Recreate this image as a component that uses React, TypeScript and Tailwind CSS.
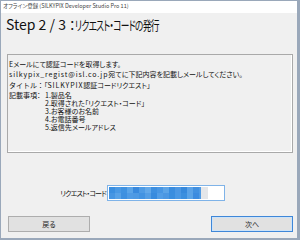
import React from "react";

const jp = "font-['Noto_Sans_CJK_JP','Noto_Sans',sans-serif]";

function Mosaic() {
  const cols = ["#3b8fe0", "#4a99e4", "#3f92e1", "#5aa4e8", "#3889dd", "#4e9be5", "#62a8e9", "#3d8fe0", "#4896e3", "#5ca4e7", "#3a8ddf", "#4b97e3", "#3689dc", "#5aa2e7", "#4190e0"];
  return (
    <svg width="100" height="12" viewBox="0 0 100 12" className="block">
      {cols.map((c, i) => (
        <rect key={i} x={i * 6} y={0} width={6} height={12} fill={c} />
      ))}
      {cols.map((c, i) => (
        <rect key={"b" + i} x={i * 6} y={6} width={6} height={6} fill={cols[(i + 5) % cols.length]} opacity={0.6} />
      ))}
      <rect x={90} y={0} width={6} height={12} fill="#4f9ae4" />
      <rect x={92} y={0} width={7} height={12} fill="#e4e6e9" />
    </svg>
  );
}

export default function App() {
  return (
    <div className={`w-[300px] h-[240px] flex flex-col bg-[#f0f0f0] border-t border-l border-r-[3px] border-b-[2px] border-[#9aa8ba] ${jp} [font-feature-settings:'palt'] text-black overflow-hidden`}>
      <div className="h-[12px] shrink-0 bg-white flex items-center pl-[2px] text-[5.5px] leading-none text-[#444] whitespace-nowrap">
        オフライン登録 (SILKYPIX Developer Studio Pro 11)
      </div>
      <div className="h-[41px] shrink-0 pt-[3px] pl-[5px]">
        <div className="flex items-baseline leading-[16px] whitespace-nowrap text-[#111]">
          <span className="text-[14px]">Step 2 / 3</span>
          <span className="text-[13px] ml-[3px]">：</span>
          <span className="inline-block origin-left scale-x-[0.67] text-[13px] tracking-[-1px]">リクエスト・コードの発行</span>
        </div>
      </div>
      <div className="h-[99px] shrink-0 ml-[6px] mr-[4px] border border-[#a9a9a9] shadow-[inset_-1px_-1px_0_#ffffff] pl-[1px] pt-[4px] text-[7px] text-[#111] whitespace-nowrap">
        <div className="leading-[10px]">Eメールにて認証コードを取得します。</div>
        <div className="leading-[10px]">
          <span className="tracking-[0.85px]">silkypix_regist@isl.co.jp</span>宛てに下記内容を記載しメールしてください。
        </div>
        <div className="leading-[10px] mt-[1px]">
          <span className="[font-feature-settings:normal]">タイトル：</span>「<span className="tracking-[0.9px]">SILKYPIX</span>認証コードリクエスト」
        </div>
        <div className="flex mt-[1px] leading-[8px]">
          <div className="w-[36px] shrink-0">記載事項：</div>
          <div className="flex flex-col">
            <div>1.製品名</div>
            <div>2.取得された「リクエスト・コード」</div>
            <div>3.お客様のお名前</div>
            <div>4.お電話番号</div>
            <div>5.返信先メールアドレス</div>
          </div>
        </div>
      </div>
      <div className="h-[32px] shrink-0" />
      <div className="h-[16px] shrink-0 flex items-center">
        <div className="w-[106px] shrink-0 text-right text-[7px] tracking-[-0.8px] leading-none text-[#111] pr-[1px]">リクエスト・コード</div>
        <div className="w-[118px] h-[16px] border border-[#7fb3e8] bg-white flex items-center pl-[1px]">
          <Mosaic />
        </div>
      </div>
      <div className="h-[15px] shrink-0" />
      <div className="h-[16px] shrink-0 flex justify-between pl-[7px] pr-[4px]">
        <div className="w-[82px] h-[16px] bg-[#e1e1e1] border border-[#adadad] flex items-center justify-center text-[7px] leading-none text-[#222]">戻る</div>
        <div className="w-[82px] h-[16px] bg-[#e1e1e1] border border-[#3f87d8] shadow-[inset_0_0_0_1px_#cde3f8] flex items-center justify-center text-[7px] leading-none text-[#222]">次へ</div>
      </div>
      <div className="flex-1" />
    </div>
  );
}
